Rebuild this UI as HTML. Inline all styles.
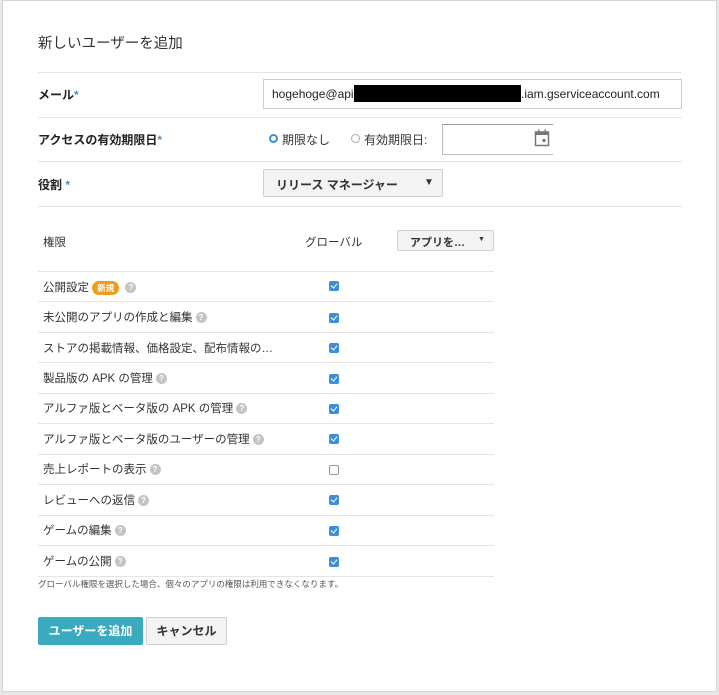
<!DOCTYPE html>
<html><head><meta charset="utf-8"><style>
*{box-sizing:border-box;margin:0;padding:0}
body{width:719px;height:695px;background:#e8e8e8;font-family:"Liberation Sans","Noto Sans CJK JP",sans-serif;color:#333;position:relative;overflow:hidden}
.dlg{position:absolute;left:2px;top:0;width:715px;height:692px;background:#fff;border:1px solid #d4d4d4}
.a{position:absolute}
.hl{position:absolute;height:1px;background:#e5e5e5}
.lbl{font-size:12px;font-weight:bold;color:#222}
.star{color:#4a90c8}
.btn{position:absolute;background:#f3f3f3;border:1px solid #d0d0d0;border-radius:2px;font-size:12px;font-weight:bold;color:#333}
.cb{position:absolute;left:329px;width:10px;height:10px;border-radius:2px;background:#3b8fd9}
.cb::after{content:"";position:absolute;left:3px;top:1px;width:3px;height:5px;border:solid #fff;border-width:0 1.5px 1.5px 0;transform:rotate(40deg)}
.cb.off{background:#fff;border:1px solid #999}
.cb.off::after{display:none}
.row{position:absolute;left:43px;font-size:11.5px;color:#333;white-space:nowrap}
.q{display:inline-block;width:11px;height:11px;border-radius:50%;background:#c4c4c4;color:#fff;font-size:8px;font-weight:bold;text-align:center;line-height:11px;vertical-align:middle;margin-left:3px}
</style></head><body>
<div class="dlg"></div>
<div class="a" style="left:38px;top:32px;font-size:14.5px;color:#333">新しいユーザーを追加</div>
<div class="hl" style="left:38px;top:72px;width:644px"></div>
<div class="a lbl" style="left:38px;top:86px">メール<span class="star">*</span></div>
<div class="a" style="left:263px;top:79px;width:419px;height:30px;border:1px solid #ccc"></div>
<div class="a" style="left:272px;top:87px;font-size:12px;color:#222">hogehoge@api-</div>
<div class="a" style="left:354px;top:85px;width:167px;height:17px;background:#000"></div>
<div class="a" style="left:521px;top:87px;font-size:12px;color:#222">.iam.gserviceaccount.com</div>
<div class="hl" style="left:38px;top:117px;width:644px"></div>
<div class="a lbl" style="left:38px;top:131px">アクセスの有効期限日<span class="star">*</span></div>
<div class="a" style="left:269px;top:134px;width:9px;height:9px;border-radius:50%;border:2.5px solid #3b8fd9;background:#fff"></div>
<div class="a" style="left:282px;top:131px;font-size:12px">期限なし</div>
<div class="a" style="left:351px;top:134px;width:9px;height:9px;border-radius:50%;border:1px solid #aaa"></div>
<div class="a" style="left:364px;top:131px;font-size:12px">有効期限日:</div>
<div class="a" style="left:442px;top:124px;width:111px;height:31px;border:1px solid #bbb;border-right:none;border-top-color:#999"></div>
<svg class="a" style="left:534px;top:129px" width="16" height="18" viewBox="0 0 16 18"><rect x="1.5" y="3" width="13" height="13.5" fill="none" stroke="#777" stroke-width="1.5"/><rect x="1.5" y="3" width="13" height="3" fill="#777"/><rect x="4" y="0.5" width="1.5" height="3" fill="#777"/><rect x="10.5" y="0.5" width="1.5" height="3" fill="#777"/><rect x="8.5" y="10" width="3" height="3" fill="#777"/></svg>
<div class="hl" style="left:38px;top:161px;width:644px"></div>
<div class="a lbl" style="left:38px;top:176px">役割 <span class="star">*</span></div>
<div class="btn" style="left:263px;top:169px;width:180px;height:28px"><span class="a" style="left:12px;top:6px">リリース マネージャー</span><span class="a" style="left:160px;top:7px;font-size:10px">▼</span></div>
<div class="hl" style="left:38px;top:206px;width:644px"></div>
<div class="a" style="left:43px;top:234px;font-size:11.5px">権限</div>
<div class="a" style="left:305px;top:234px;font-size:11.5px">グローバル</div>
<div class="btn" style="left:397px;top:230px;width:97px;height:21px;font-size:11px"><span class="a" style="left:12px;top:3px">アプリを…</span><span class="a" style="left:80px;top:5px;font-size:7px">▼</span></div>
<div class="hl" style="left:38px;top:271px;width:456px"></div>
<div class="row" style="top:279px">公開設定 <span style="display:inline-block;background:#f09a1e;color:#fff;font-size:8.5px;font-weight:bold;border-radius:7px;padding:1px 5px;vertical-align:middle">新規</span> <span class="q">?</span></div><div class="cb" style="top:281px"></div>
<div class="hl" style="left:38px;top:301px;width:456px"></div>
<div class="row" style="top:309px">未公開のアプリの作成と編集<span class="q">?</span></div><div class="cb" style="top:313px"></div>
<div class="hl" style="left:38px;top:332px;width:456px"></div>
<div class="row" style="top:340px">ストアの掲載情報、価格設定、配布情報の…</div><div class="cb" style="top:343px"></div>
<div class="hl" style="left:38px;top:362px;width:456px"></div>
<div class="row" style="top:370px">製品版の APK の管理<span class="q">?</span></div><div class="cb" style="top:374px"></div>
<div class="hl" style="left:38px;top:393px;width:456px"></div>
<div class="row" style="top:400px">アルファ版とベータ版の APK の管理<span class="q">?</span></div><div class="cb" style="top:404px"></div>
<div class="hl" style="left:38px;top:423px;width:456px"></div>
<div class="row" style="top:431px">アルファ版とベータ版のユーザーの管理<span class="q">?</span></div><div class="cb" style="top:434px"></div>
<div class="hl" style="left:38px;top:454px;width:456px"></div>
<div class="row" style="top:461px">売上レポートの表示<span class="q">?</span></div><div class="cb off" style="top:465px"></div>
<div class="hl" style="left:38px;top:484px;width:456px"></div>
<div class="row" style="top:492px">レビューへの返信<span class="q">?</span></div><div class="cb" style="top:495px"></div>
<div class="hl" style="left:38px;top:515px;width:456px"></div>
<div class="row" style="top:522px">ゲームの編集<span class="q">?</span></div><div class="cb" style="top:526px"></div>
<div class="hl" style="left:38px;top:545px;width:456px"></div>
<div class="row" style="top:553px">ゲームの公開<span class="q">?</span></div><div class="cb" style="top:557px"></div>
<div class="hl" style="left:38px;top:576px;width:456px"></div>
<div class="a" style="left:38px;top:578px;font-size:8.5px;color:#555">グローバル権限を選択した場合、個々のアプリの権限は利用できなくなります。</div>
<div class="a" style="left:38px;top:617px;width:105px;height:28px;background:#3aaabf;border-radius:2px;color:#fff;font-size:12px;font-weight:bold;text-align:center;line-height:28px">ユーザーを追加</div>
<div class="btn" style="left:146px;top:617px;width:81px;height:28px;text-align:center;line-height:26px">キャンセル</div>
</body></html>
